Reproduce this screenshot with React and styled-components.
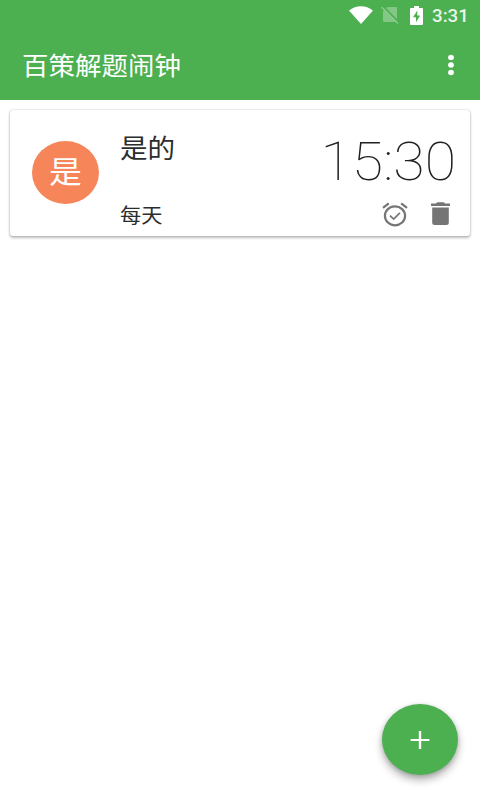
import React from "react";
import styled, { createGlobalStyle } from "styled-components";

const GlobalStyle = createGlobalStyle`
  * { box-sizing: border-box; }
  body {
    margin: 0;
    background: #fff;
    font-family: Roboto, "Noto Sans CJK SC", sans-serif;
  }
`;

const Screen = styled.div`
  width: 480px;
  height: 800px;
  display: flex;
  flex-direction: column;
  overflow: hidden;
  background: #fff;
`;

const Header = styled.header`
  height: 100px;
  flex: none;
  color: #fff;
  background: #4caf50;
`;

const StatusBar = styled.div`
  height: 30px;
  display: flex;
  align-items: center;
  justify-content: flex-end;
  padding-right: 12px;
`;

const StatusIcon = styled.svg`
  display: block;
  flex: none;
  margin-right: ${(p) => p.$gap}px;
`;

const Clock = styled.span`
  width: 36px;
  font-size: 18px;
  line-height: 30px;
  font-weight: 500;
  white-space: nowrap;
  color: #e9f6e9;
  transform: translateY(1px) scaleX(1.04);
  transform-origin: left;
`;

const Toolbar = styled.div`
  height: 70px;
  display: flex;
  align-items: center;
  justify-content: space-between;
  padding: 0 16px 0 22px;
`;

const Title = styled.h1`
  margin: 0;
  padding-top: 3px;
  font-size: 25px;
  line-height: 70px;
  font-weight: 400;
  white-space: nowrap;
  transform: scaleX(1.06);
  transform-origin: left;
`;

const IconButton = styled.button`
  display: flex;
  align-items: center;
  justify-content: center;
  width: ${(p) => p.$width}px;
  height: 26px;
  padding: 0;
  border: 0;
  color: inherit;
  background: none;
`;

const Card = styled.article`
  display: flex;
  flex: none;
  height: 126px;
  margin: 10px 10px 0;
  padding-left: 22px;
  border-radius: 3px;
  background: #fff;
  box-shadow: 0 2px 3px rgba(0, 0, 0, 0.24), 0 0 2px rgba(0, 0, 0, 0.26);
`;

const Avatar = styled.div`
  width: 67px;
  height: 63px;
  margin-top: 31px;
  border-radius: 50%;
  background: #f68559;
  color: #fff;
  font-size: 31px;
  line-height: 64px;
  text-align: center;
`;

const AvatarText = styled.span`
  display: block;
  transform: scaleX(1.06);
`;

const Details = styled.div`
  flex: 1;
  margin-left: 21px;
  padding-top: 19px;
  color: #2b2d2e;
`;

const AlarmName = styled.h2`
  margin: 0;
  font-size: 26px;
  line-height: 40px;
  font-weight: 400;
  transform: scaleX(1.06);
  transform-origin: left;
`;

const Repeat = styled.p`
  margin: 32px 0 0;
  font-size: 20px;
  line-height: 30px;
  transform: scaleX(1.06);
  transform-origin: left;
`;

const Schedule = styled.div`
  display: flex;
  flex-direction: column;
  align-items: flex-end;
  padding-right: 14px;
`;

const Time = styled.time`
  height: 64px;
  margin-top: 19px;
  font-size: 54.5px;
  line-height: 64px;
  font-weight: 100;
  white-space: nowrap;
  color: #212121;
  transform: scaleX(1.05);
  transform-origin: right;
`;

const Actions = styled.div`
  display: flex;
  gap: 23px;
  margin-top: 8px;
  padding-right: 6px;
  color: #757575;
`;

const Fab = styled.button`
  position: absolute;
  left: 382px;
  top: 704px;
  width: 76px;
  height: 71px;
  display: flex;
  align-items: center;
  justify-content: center;
  padding: 0;
  border: 0;
  border-radius: 50%;
  color: #fff;
  background: #4caf50;
  box-shadow: 0 5px 8px rgba(0, 0, 0, 0.3), 0 1px 4px rgba(0, 0, 0, 0.16);
`;

export default function App() {
  return (
    <Screen>
      <GlobalStyle />
      <Header>
        <StatusBar>
          <StatusIcon $gap={8} width="24" height="18" viewBox="0 0 24 18" fill="#fff">
            <path d="M0 4.5C7-1.2 17-1.2 24 4.5L12 18Z" />
          </StatusIcon>
          <StatusIcon $gap={11} width="18" height="18" viewBox="0 0 18 18">
            <path d="M6.5 1H15Q16 1 16 2V16H3Q2 16 2 15V5Z" fill="#83c785" />
            <path d="M1.8.2 18 16.8" stroke="#4caf50" strokeWidth="2" />
            <path d="M.6 1 17 17.5" stroke="#8bcb8d" strokeWidth="1.5" />
          </StatusIcon>
          <StatusIcon $gap={9} width="13" height="19" viewBox="0 0 13 19">
            <path d="M1 2H4V0H9V2H12Q13 2 13 3V18Q13 19 12 19H1Q0 19 0 18V3Q0 2 1 2Z" fill="#fff" />
            <path d="M7.3 4.5 3 11.2H6V16.3L10.2 9.4H7.3Z" fill="#4caf50" />
          </StatusIcon>
          <Clock>3:31</Clock>
        </StatusBar>
        <Toolbar>
          <Title>百策解题闹钟</Title>
          <IconButton $width={26} aria-label="菜单">
            <svg width="8" height="22" viewBox="0 0 8 22" fill="currentColor">
              <ellipse cx="4" cy="3.4" rx="2.9" ry="2.7" />
              <ellipse cx="4" cy="11" rx="2.9" ry="2.7" />
              <ellipse cx="4" cy="18.5" rx="2.9" ry="2.7" />
            </svg>
          </IconButton>
        </Toolbar>
      </Header>
      <Card>
        <Avatar><AvatarText>是</AvatarText></Avatar>
        <Details>
          <AlarmName>是的</AlarmName>
          <Repeat>每天</Repeat>
        </Details>
        <Schedule>
          <Time>15:30</Time>
          <Actions>
            <IconButton $width={26} aria-label="启用">
              <svg width="26" height="25" viewBox="0 0 26 25" fill="none" stroke="currentColor" strokeWidth="2.2">
                <ellipse cx="13" cy="13.8" rx="10.1" ry="9.5" />
                <path d="M1 5.8 6.8 1.3M19.2 1.3 25 5.8" />
                <path d="m8 13.7 3.7 3.4 6.2-6.2" strokeWidth="1.7" />
              </svg>
            </IconButton>
            <IconButton $width={19} aria-label="删除">
              <svg width="19" height="24" viewBox="0 0 19 24" fill="currentColor">
                <path d="M0 1.5H5L6.2.3H12.8L14 1.5H19V3.9H0Z" />
                <path d="M1.2 5.4H17.8V20.5Q17.8 23 15.3 23H3.7Q1.2 23 1.2 20.5Z" />
              </svg>
            </IconButton>
          </Actions>
        </Schedule>
      </Card>
      <Fab aria-label="添加">
        <svg width="20" height="20" viewBox="0 0 20 20" fill="currentColor">
          <path d="M.6 8.9H8.8V1H11.2V8.9H19.4V11.1H11.2V19H8.8V11.1H.6Z" />
        </svg>
      </Fab>
    </Screen>
  );
}
